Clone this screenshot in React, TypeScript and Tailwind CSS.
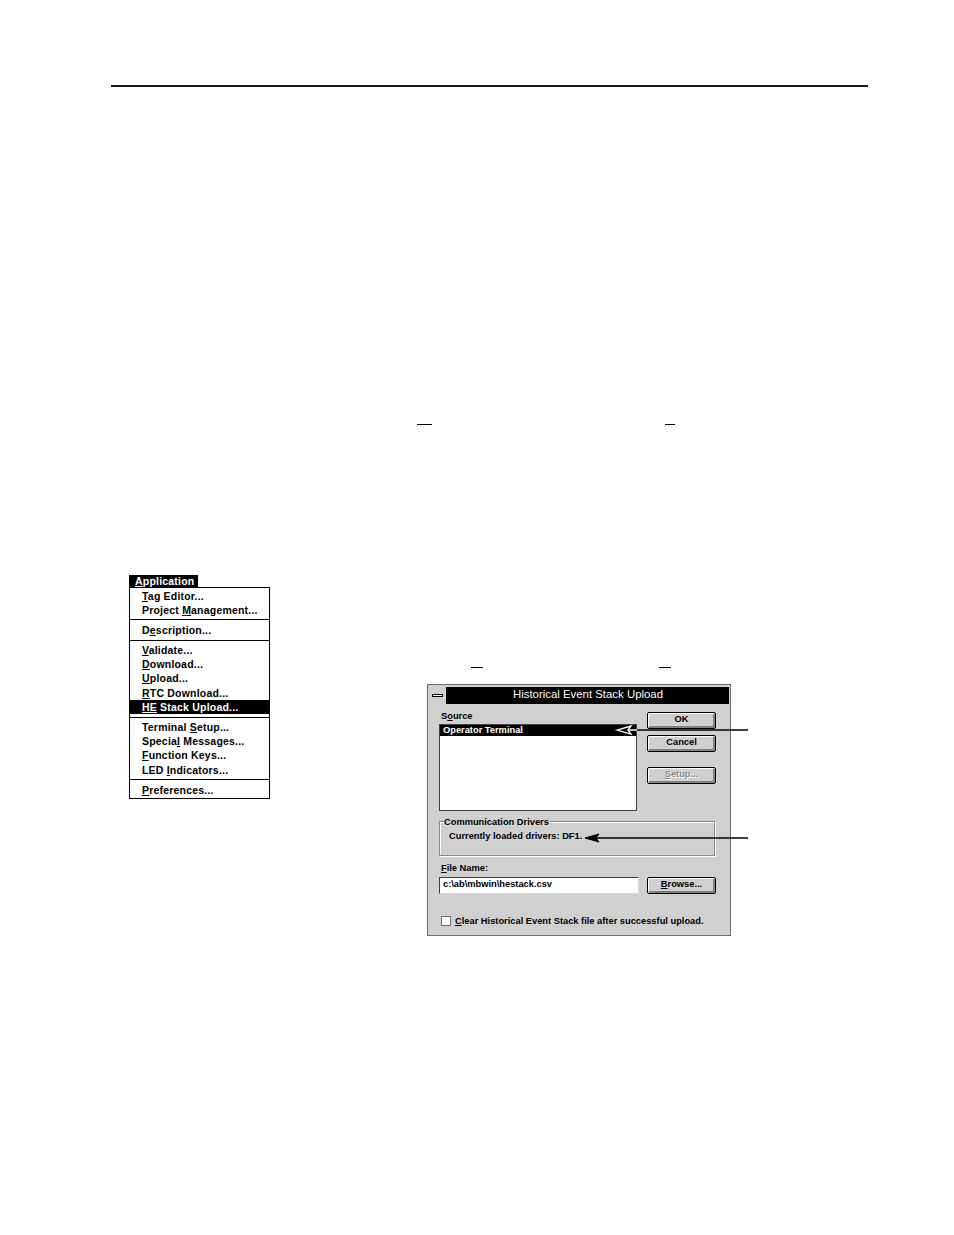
import React from "react";

const MENU: (string | [string, string, string] | null)[] = [
  ["", "T", "ag Editor..."],
  ["Project ", "M", "anagement..."],
  null,
  ["D", "e", "scription..."],
  null,
  ["", "V", "alidate..."],
  ["", "D", "ownload..."],
  ["", "U", "pload..."],
  ["", "R", "TC Download..."],
  ["", "HE", " Stack Upload..."],
  null,
  ["Terminal ", "S", "etup..."],
  ["Specia", "l", " Messages..."],
  ["", "F", "unction Keys..."],
  ["LED ", "I", "ndicators..."],
  null,
  ["", "P", "references..."],
];

function AppMenu() {
  return (
    <div className="w-[141px] text-[10.5px] font-bold tracking-[0.2px] text-black">
      <div className="flex">
        <div className="h-[12px] w-[69px] bg-black pl-[6px] text-white leading-[12px]">
          <u>A</u>pplication
        </div>
      </div>
      <div className="border border-black bg-white pt-[1px] pb-[1px]">
        {MENU.map((item, i) =>
          item === null ? (
            <div key={i} className="flex h-[6px] items-center">
              <div className="h-px w-full bg-black" />
            </div>
          ) : (
            <div
              key={i}
              className={`h-[14.2px] pl-[12px] leading-[14px] ${
                item[1] === "HE" ? "bg-black text-white" : ""
              }`}
            >
              {item[0]}
              <u>{item[1]}</u>
              {item[2]}
            </div>
          )
        )}
      </div>
    </div>
  );
}

function Button({
  children,
  disabled,
  bold,
}: {
  children: React.ReactNode;
  disabled?: boolean;
  bold?: boolean;
}) {
  return (
    <div
      className={`flex h-[17px] w-[69px] items-center justify-center rounded-[2px] bg-[#d0d0d0] leading-none shadow-[inset_1px_1px_0_#fff,inset_-2px_-2px_0_#808080] ${
        bold ? "border-[1.5px] border-black" : "border border-black"
      } ${disabled ? "text-[#888] [text-shadow:1px_1px_0_#fff]" : "text-black"}`}
    >
      {children}
    </div>
  );
}

function Dialog() {
  return (
    <div className="h-[252px] w-[304px] border border-[#6e6e6e] bg-[#d0d0d0] px-[1px] pt-[2px] text-[9.3px] font-bold text-black">
      <div className="flex h-[17px]">
        <div className="flex w-[18px] items-center justify-center border-r border-black bg-[#d0d0d0]">
          <div className="h-[3px] w-[11px] border border-black bg-white" />
        </div>
        <div className="flex flex-1 items-center justify-center bg-black text-[11.4px] font-normal text-white">
          Historical Event Stack Upload
        </div>
      </div>

      <div className="pl-[10px] pt-[8px]">
        <div className="flex">
          <div className="w-[198px]">
            <div className="pl-[2px] leading-[9px]">
              S<u>o</u>urce
            </div>
            <div className="mt-[3px] h-[87px] border border-[#404040] bg-white">
              <div className="h-[11px] bg-black pl-[3px] leading-[11px] text-white">
                Operator Terminal
              </div>
            </div>
          </div>
          <div className="ml-[10px] flex flex-col">
            <Button bold>OK</Button>
            <div className="mt-[6px]">
              <Button>Cancel</Button>
            </div>
            <div className="mt-[15px]">
              <Button disabled>
                <u>S</u>etup...
              </Button>
            </div>
          </div>
        </div>

        <fieldset className="mt-[6px] w-[276px] border border-[#8a8a8a] pb-[14px] pl-[9px] pt-[4px] shadow-[1px_1px_0_#fff,inset_1px_1px_0_#fff]">
          <legend className="ml-[-5px] bg-[#d0d0d0] pr-[1px] leading-[10px]">
            Communication Drivers
          </legend>
          <div className="leading-[10px]">Currently loaded drivers: DF1.</div>
        </fieldset>

        <div className="mt-[8px] pl-[2px] leading-[9px]">
          <u>F</u>ile Name:
        </div>
        <div className="mt-[4px] flex">
          <div className="flex h-[17px] w-[200px] items-center border border-[#404040] border-b-[#d8d8d8] border-r-[#d8d8d8] bg-white pl-[3px]">
            {"c:\\ab\\mbwin\\hestack.csv"}
          </div>
          <div className="ml-[8px]">
            <Button>
              <u>B</u>rowse...
            </Button>
          </div>
        </div>

        <div className="mt-[22px] flex h-[10px] items-center pl-[2px]">
          <div className="h-[10px] w-[10px] border border-[#707070] bg-white" />
          <div className="ml-[4px] leading-[10px]">
            <u>C</u>lear Historical Event Stack file after successful upload.
          </div>
        </div>
      </div>
    </div>
  );
}

function Arrows() {
  return (
    <svg
      className="pointer-events-none absolute left-[580px] top-[720px]"
      width="175"
      height="130"
      viewBox="580 720 175 130"
    >
      {/* source arrow */}
      <line x1="628" y1="730" x2="637" y2="730" stroke="#fff" strokeWidth="1.5" />
      <line x1="637" y1="730" x2="748" y2="730" stroke="#000" strokeWidth="1.5" />
      <polygon
        points="617,730 631,726 628,730 631,734"
        fill="#000"
        stroke="#fff"
        strokeWidth="1.3"
      />
      {/* drivers arrow */}
      <line x1="595" y1="838" x2="748" y2="838" stroke="#000" strokeWidth="1.6" />
      <polygon
        points="585,838 599,834 596,838 599,842"
        fill="#000"
        stroke="#000"
        strokeWidth="1"
      />
    </svg>
  );
}

export default function App() {
  return (
    <div className="relative h-[1235px] w-[954px] overflow-hidden bg-white font-['Liberation_Sans',Arial,sans-serif]">
      <div className="pt-[85px]">
        <div className="ml-[111px] h-[1.5px] w-[757px] bg-[#1a1a1a]" />
      </div>

      <div className="mt-[337px] flex">
        <div className="ml-[417px] h-[1.5px] w-[15px] bg-black" />
        <div className="ml-[233px] h-[1.5px] w-[10px] bg-black" />
      </div>

      <div className="mt-[149.5px] flex">
        <div className="ml-[129px]">
          <AppMenu />
        </div>
        <div className="ml-[157px] flex flex-col">
          <div className="mt-[92px] flex">
            <div className="ml-[44px] h-[1.5px] w-[12px] bg-black" />
            <div className="ml-[176px] h-[1.5px] w-[12px] bg-black" />
          </div>
          <div className="mt-[15.5px]">
            <Dialog />
          </div>
        </div>
      </div>

      <Arrows />
    </div>
  );
}
